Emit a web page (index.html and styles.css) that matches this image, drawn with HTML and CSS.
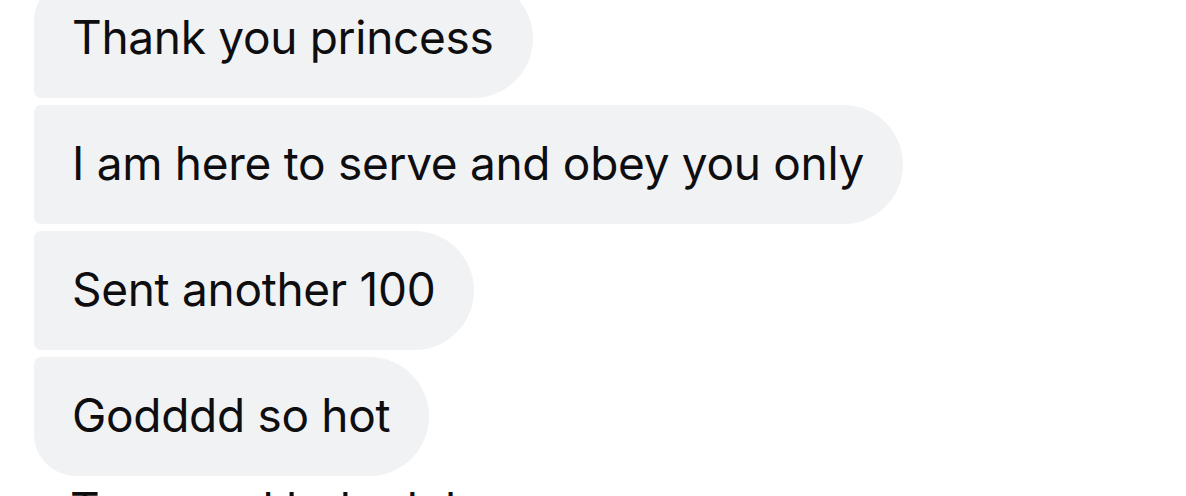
FILE: index.html
```html
<!DOCTYPE html>
<html lang="en">
<head>
<meta charset="utf-8">
<title>Messages</title>
<link rel="stylesheet" href="styles.css">
</head>
<body>
<div class="thread">
  <div class="bubble first">Thank you princess</div>
  <div class="bubble">I am here to serve and obey you only</div>
  <div class="bubble">Sent another 100</div>
  <div class="bubble last">Godddd so hot</div>
  <div class="plain">Too good babe lol</div>
</div>
</body>
</html>
```

FILE: styles.css
```css
html, body {
  margin: 0;
  padding: 0;
  background: #ffffff;
}
body {
  width: 1186px;
  height: 496px;
  overflow: hidden;
  font-family: "Inter", "Liberation Sans", sans-serif;
}
.thread {
  display: flex;
  flex-direction: column;
  align-items: flex-start;
  gap: 7px;
  padding-left: 34px;
  margin-top: -21px;
}
.bubble {
  box-sizing: border-box;
  height: 119px;
  display: flex;
  align-items: center;
  padding: 0 39px 4px 38px;
  background: #f1f2f4;
  color: #0e0e10;
  font-size: 46px;
  letter-spacing: -0.3px;
  white-space: nowrap;
  border-radius: 7px 60px 60px 7px;
}
.bubble.first {
  border-top-left-radius: 42px;
}
.bubble.last {
  border-bottom-left-radius: 42px;
}
.plain {
  padding-left: 36px;
  margin-top: 3px;
  font-size: 46px;
  line-height: 1;
  letter-spacing: -0.3px;
  color: #0e0e10;
  white-space: nowrap;
}
```
